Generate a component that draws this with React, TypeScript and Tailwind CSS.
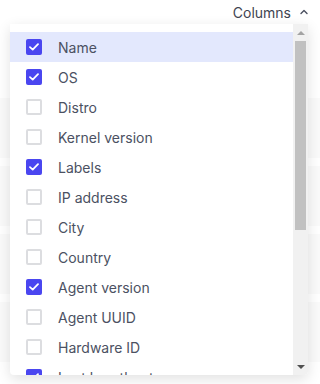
import React from 'react';

const columns = [
  { name: 'Name', checked: true },
  { name: 'OS', checked: true },
  { name: 'Distro', checked: false },
  { name: 'Kernel version', checked: false },
  { name: 'Labels', checked: true },
  { name: 'IP address', checked: false },
  { name: 'City', checked: false },
  { name: 'Country', checked: false },
  { name: 'Agent version', checked: true },
  { name: 'Agent UUID', checked: false },
  { name: 'Hardware ID', checked: false },
  { name: 'Last heartbeat', checked: true },
];

function Check({ checked }: { checked: boolean }) {
  if (!checked) {
    return <div className="w-4 h-4 rounded-[2px] border-2 border-[#dcdde0] bg-white shrink-0" />;
  }
  return (
    <div className="w-4 h-4 rounded-[2px] bg-[#4a46f0] flex items-center justify-center shrink-0">
      <svg width="10" height="8" viewBox="0 0 10 8" fill="none">
        <path d="M1 4.2L3.7 6.6L9 1.2" stroke="white" strokeWidth="1.8" strokeLinecap="round" strokeLinejoin="round" />
      </svg>
    </div>
  );
}

export default function App() {
  return (
    <div className="relative w-[320px] h-[384px] overflow-hidden bg-white font-['Inter',sans-serif]">
      {/* Header */}
      <div className="h-6 flex items-center justify-end pr-3 gap-[9px] text-[14px] text-[#3f4451]">
        <span>Columns</span>
        <svg width="8" height="6" viewBox="0 0 8 6" fill="none">
          <path d="M1 4.5L4 1.5L7 4.5" stroke="#4b5060" strokeWidth="1.4" strokeLinecap="round" strokeLinejoin="round" />
        </svg>
      </div>

      {/* Faint table rows behind */}
      <div className="flex flex-col gap-[8px] mt-[74px]">
        <div className="h-[60px] bg-[#fafafa]" />
        <div className="h-[60px] bg-[#fafafa]" />
        <div className="h-[60px] bg-[#fafafa]" />
        <div className="h-[60px] bg-[#fafafa]" />
      </div>

      {/* Dropdown */}
      <div className="absolute left-[10px] top-[24px] w-[298px] h-[351px] bg-white rounded-b shadow-[0_4px_14px_rgba(0,0,0,0.12)] flex overflow-hidden">
        <div className="flex-1 pt-2 overflow-hidden">
          {columns.map((c, i) => (
            <div
              key={c.name}
              className={`h-[30px] flex items-center pl-4 gap-4 text-[14px] text-[#4b5162] ${i === 0 ? 'bg-[#e3e8fd]' : ''}`}
            >
              <Check checked={c.checked} />
              <span>{c.name}</span>
            </div>
          ))}
        </div>
        <div className="w-[15px] bg-[#f1f1f1] flex flex-col items-center">
          <div className="h-[17px] flex items-center justify-center">
            <div className="w-0 h-0 border-l-[4px] border-r-[4px] border-b-[4px] border-l-transparent border-r-transparent border-b-[#a3a3a3]" />
          </div>
          <div className="w-[11px] h-[189px] bg-[#c1c1c1]" />
          <div className="flex-1" />
          <div className="h-[17px] flex items-center justify-center">
            <div className="w-0 h-0 border-l-[4px] border-r-[4px] border-t-[4px] border-l-transparent border-r-transparent border-t-[#505050]" />
          </div>
        </div>
      </div>
    </div>
  );
}
